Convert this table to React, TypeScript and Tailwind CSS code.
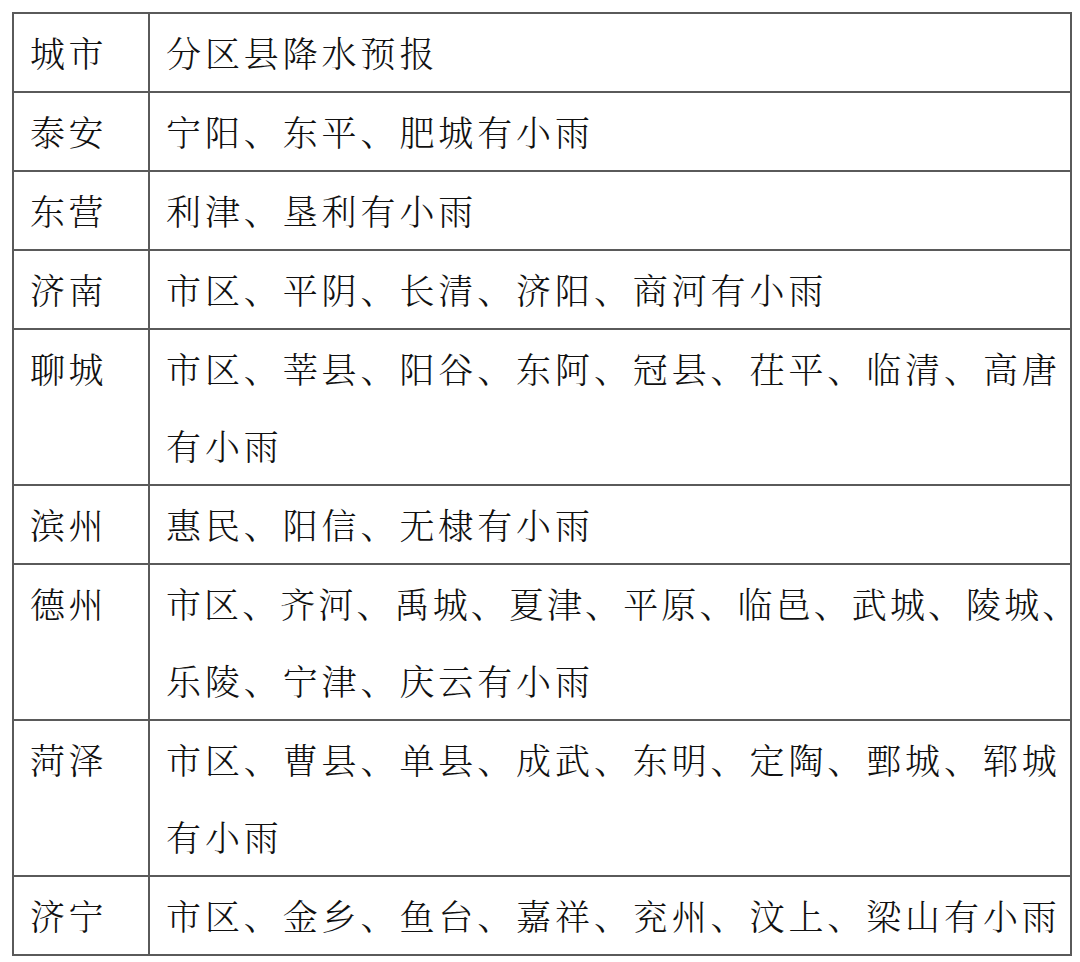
import React from "react";

const rows: { city: string; lines: string[]; tight?: boolean }[] = [
  { city: "城市", lines: ["分区县降水预报"] },
  { city: "泰安", lines: ["宁阳、东平、肥城有小雨"] },
  { city: "东营", lines: ["利津、垦利有小雨"] },
  { city: "济南", lines: ["市区、平阴、长清、济阳、商河有小雨"] },
  { city: "聊城", lines: ["市区、莘县、阳谷、东阿、冠县、茌平、临清、高唐", "有小雨"] },
  { city: "滨州", lines: ["惠民、阳信、无棣有小雨"] },
  { city: "德州", lines: ["市区、齐河、禹城、夏津、平原、临邑、武城、陵城、", "乐陵、宁津、庆云有小雨"], tight: true },
  { city: "菏泽", lines: ["市区、曹县、单县、成武、东明、定陶、鄄城、郓城", "有小雨"] },
  { city: "济宁", lines: ["市区、金乡、鱼台、嘉祥、兖州、汶上、梁山有小雨"] },
];

export default function App() {
  return (
    <div className="bg-white w-[1080px] h-[962px] pt-[12px] pl-[12px]">
      <table
        className="table-fixed border-collapse w-[1060px] text-[#111] text-[35px] font-light leading-[77px]"
        style={{ fontFamily: '"Noto Serif CJK SC", "Noto Sans CJK SC", serif' }}
      >
        <colgroup>
          <col className="w-[136px]" />
          <col />
        </colgroup>
        <tbody>
          {rows.map((r, i) => (
            <tr key={i}>
              <td className="border-2 border-[#5a5a5a] align-top p-0 pl-[16px] whitespace-nowrap tracking-[3.5px]">
                {r.city}
              </td>
              <td className="border-2 border-[#5a5a5a] align-top p-0 pl-[16px] whitespace-nowrap overflow-visible">
                {r.lines.map((l, j) => (
                  <div
                    key={j}
                    className={j === 0 && r.tight ? "tracking-[3.1px]" : "tracking-[3.9px]"}
                  >
                    {l}
                  </div>
                ))}
              </td>
            </tr>
          ))}
        </tbody>
      </table>
    </div>
  );
}
